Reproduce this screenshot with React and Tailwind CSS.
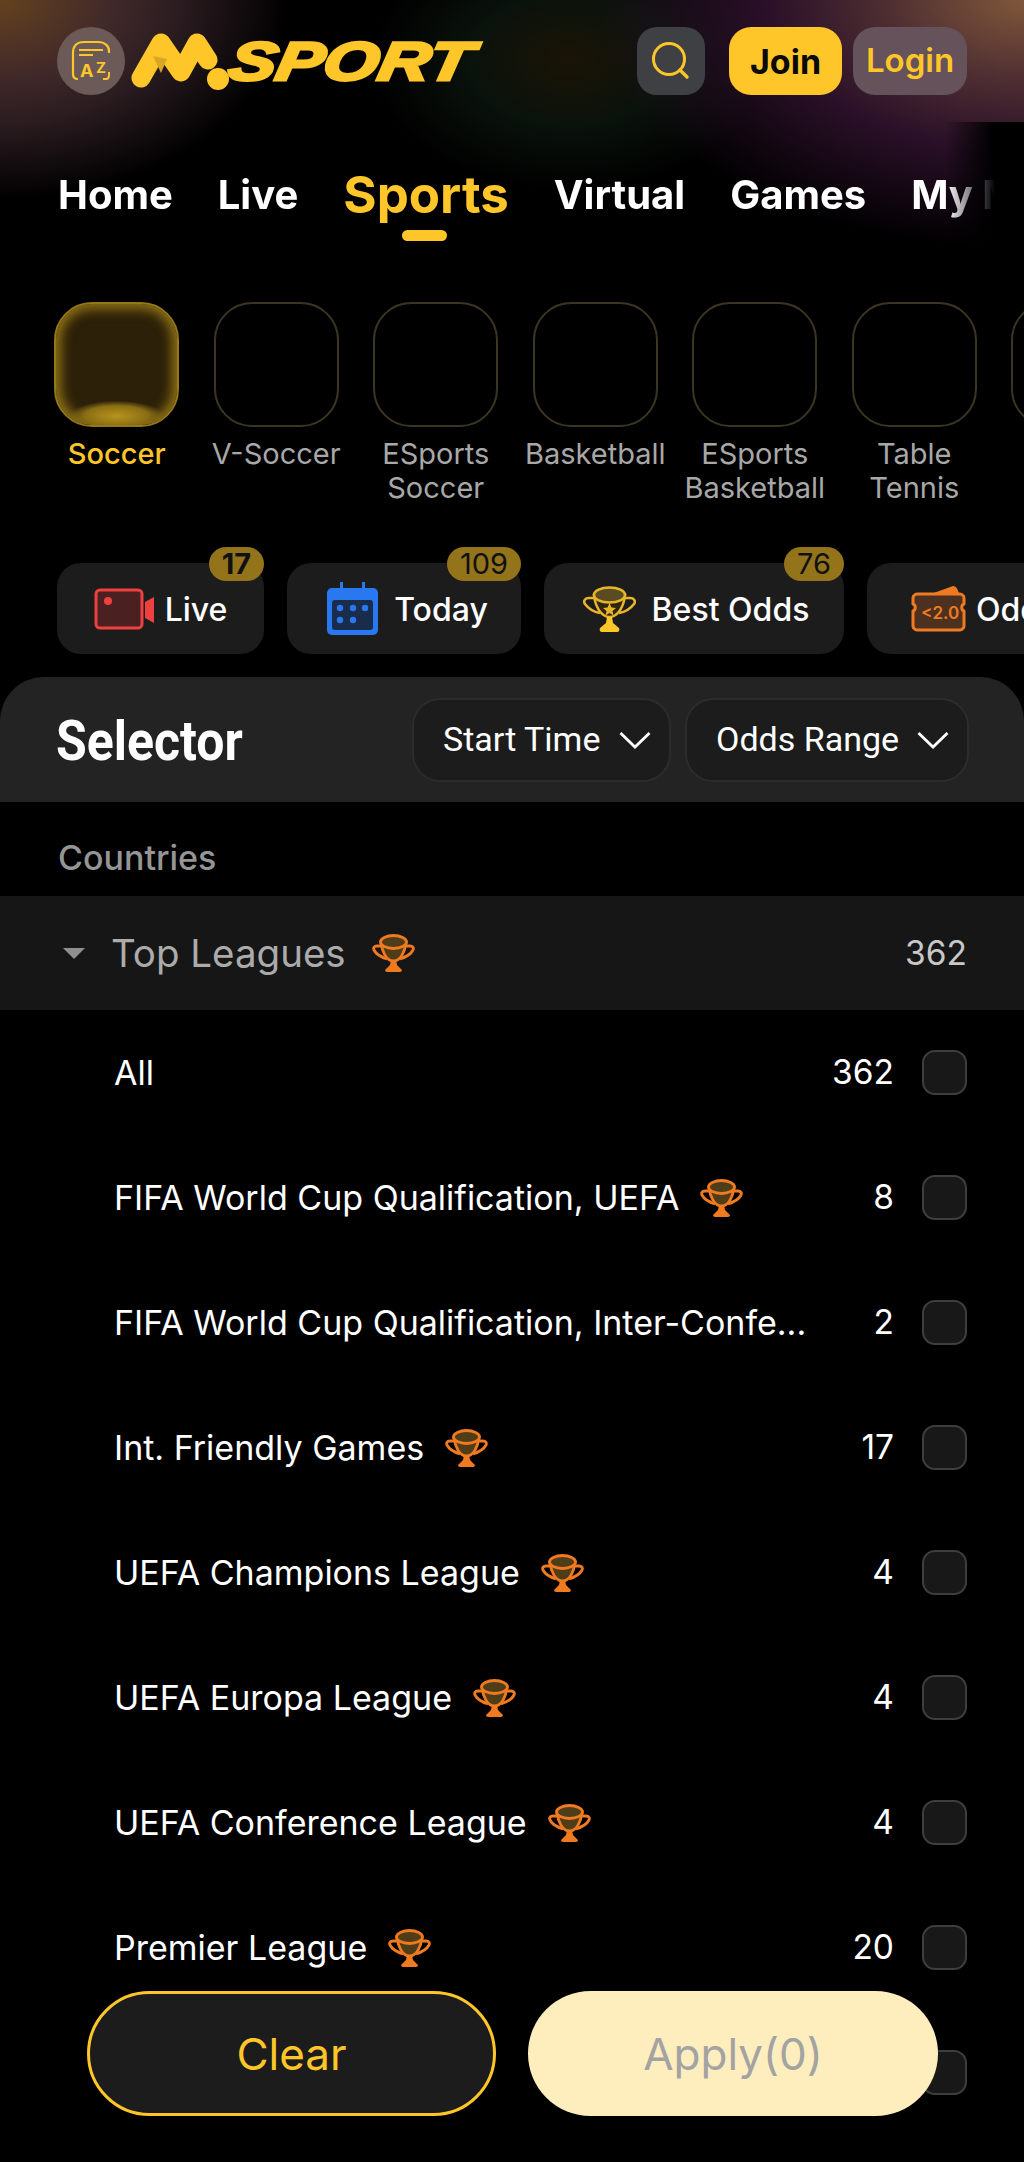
import React from "react";

const Y = "#ffc629";

function Trophy() {
  return (
    <svg viewBox="0 0 43 38" className="w-[43px] h-[38px] shrink-0" fill="none">
      <path d="M9 8c1 9 5 19 12.500 19S33 17 34 8z" fill="#4f3c18" stroke="#f07a20" strokeWidth="2.800" />
      <ellipse cx="21.500" cy="8" rx="13" ry="6.500" fill="#4f3c18" stroke="#f07a20" strokeWidth="2.800" />
      <path d="M9 12H5c-3 0-4 2-3 4 2 4 7 7 13 9M34 12h4c3 0 4 2 3 4-2 4-7 7-13 9" stroke="#f07a20" strokeWidth="2.800" />
      <path d="M19 26h5l1 5 5 5c0 1-1 2-2 2H15c-1 0-2-1-2-2l5-5z" fill="#f07a20" />
    </svg>
  );
}

function Chevron() {
  return (
    <svg viewBox="0 0 32 18" className="w-[32px] h-[18px] shrink-0" fill="none">
      <path d="M1.500 2L16 16 30.500 2" stroke="#fff" strokeWidth="2.800" />
    </svg>
  );
}

function Logo() {
  return (
    <div className="flex items-center ml-[6px] h-[60px]">
      <svg viewBox="0 0 100 58" className="w-[100px] h-[58px] shrink-0" fill="none">
        <path d="M10 46L30 11 50 40 66 11 77 28" stroke={Y} strokeWidth="19" strokeLinecap="round" strokeLinejoin="round" />
        <path d="M22 24l14 3-6 14z" fill="#d9a822" />
        <circle cx="87" cy="47" r="11" fill={Y} />
      </svg>
      <span className="-ml-[1px] w-[246px] inline-block font-['Liberation_Sans',sans-serif] font-bold italic text-[54px] leading-[60px] text-[#ffc629] [-webkit-text-stroke:3px_#ffc629] scale-x-[1.31] -skew-x-[8deg] origin-left whitespace-nowrap">
        SPORT
      </span>
    </div>
  );
}

function Tile({ label, active }) {
  return (
    <div className="w-[127.500px] shrink-0 flex flex-col items-center">
      {active ? (
        <div className="relative w-[125px] h-[125px] rounded-[38px] border-2 border-[#94761b] bg-[#2c2008] shadow-[inset_0_0_12px_5px_#8f7216] overflow-hidden">
          <div className="absolute left-[14px] right-[14px] bottom-0 h-[24px] bg-[radial-gradient(ellipse_at_50%_62%,#b8941c_0%,#8a6e14_48%,transparent_72%)]" />
        </div>
      ) : (
        <div className="w-[125px] h-[125px] rounded-[38px] border-2 border-[#3d3523]" />
      )}
      <p className={`mt-[10px] text-[29px] leading-[34px] text-center whitespace-pre ${active ? "text-[#ffc629] font-medium" : "text-[#a8a8a8]"}`}>
        {label}
      </p>
    </div>
  );
}

function Pill({ icon, label, badge, w, gap, badgeBold }) {
  return (
    <div className={`relative h-[91px] shrink-0 rounded-[24px] bg-[#1c1c1c] flex items-center justify-center ${w} ${gap}`}>
      {icon}
      <span className="mt-[2px] text-[32px] font-medium text-white">{label}</span>
      <span className={`absolute right-0 -top-[16px] h-[34px] rounded-full bg-[#94741a] px-[13px] text-[29px] leading-[34px] text-[#111] ${badgeBold ? "font-bold" : ""}`}>
        {badge}
      </span>
    </div>
  );
}

const rows = [
  ["All", "362", false],
  ["FIFA World Cup Qualification, UEFA", "8", true],
  ["FIFA World Cup Qualification, Inter-Confe...", "2", false],
  ["Int. Friendly Games", "17", true],
  ["UEFA Champions League", "4", true],
  ["UEFA Europa League", "4", true],
  ["UEFA Conference League", "4", true],
  ["Premier League", "20", true],
];

export default function App() {
  return (
    <div className="relative w-[1024px] h-[2162px] overflow-hidden bg-black font-['Inter',sans-serif] text-white">
      <div className="relative h-[250px] bg-[radial-gradient(ellipse_290px_200px_at_0px_0px,#64421f_0%,#3f2829_40%,#2a1c20_62%,transparent_100%),radial-gradient(ellipse_430px_250px_at_1024px_0px,#80573a_0%,#4e2e32_32%,#2a1028_60%,transparent_100%),radial-gradient(ellipse_200px_130px_at_570px_60px,#1a1406_0%,#0a120c_50%,transparent_100%)]">
        <div className="absolute right-0 top-[122px] w-[80px] h-[128px] bg-[linear-gradient(90deg,transparent,#000_62%)]" />
        <div className="relative flex items-center px-[57px] pt-[27px] h-[95px]">
          <div className="w-[68px] h-[68px] rounded-full bg-[#6b5a58] flex items-center justify-center shrink-0">
            <svg viewBox="0 0 42 42" className="w-[42px] h-[42px]" fill="none">
              <path d="M8 39c-3 0-5-2-5-5V13C3 6 7 2 14 2h14c7 0 11 4 11 9v2" stroke={Y} strokeWidth="2.200" />
              <path d="M33 39h3c2 0 3-2 3-4v-3M9 10h24M9 15h14" stroke={Y} strokeWidth="2" />
              <text x="10" y="37" fontSize="18" fontWeight="700" fill={Y} fontFamily="Inter">A</text>
              <text x="26" y="33" fontSize="15" fontWeight="700" fill={Y} fontFamily="Inter">Z</text>
            </svg>
          </div>
          <Logo />
          <div className="ml-auto flex items-center">
            <div className="w-[68px] h-[68px] rounded-[20px] bg-[#3e4044] flex items-center justify-center mr-[24px]">
              <svg viewBox="0 0 40 40" className="w-[40px] h-[40px]" fill="none">
                <circle cx="18" cy="18" r="15.500" stroke={Y} strokeWidth="3" />
                <path d="M29 29l7 7" stroke={Y} strokeWidth="3.400" strokeLinecap="round" />
              </svg>
            </div>
            <div className="w-[113px] h-[68px] rounded-[22px] bg-[#ffc629] flex items-center justify-center text-[34px] font-bold text-[#0a0a0a] mr-[11px]">Join</div>
            <div className="w-[114px] h-[68px] rounded-[22px] bg-[#66525a] flex items-center justify-center text-[33px] font-semibold text-[#ffc629]">Login</div>
          </div>
        </div>
        <nav className="relative flex items-baseline gap-[45px] pl-[58px] mt-[66px] h-[80px] overflow-hidden whitespace-nowrap text-[40px] leading-[60px] font-bold [mask-image:linear-gradient(90deg,#000_945px,transparent_995px)]">
          <span>Home</span>
          <span>Live</span>
          <span className="relative translate-y-[4px] text-[#ffc629] text-[51px]">
            Sports
            <span className="absolute left-[59px] top-[65px] w-[45px] h-[11px] rounded-full bg-[#ffc629]" />
          </span>
          <span>Virtual</span>
          <span>Games</span>
          <span>My Matches</span>
        </nav>
      </div>

      <div className="flex gap-[32px] pl-[53px] mt-[52px] h-[236px] overflow-hidden">
        <Tile label="Soccer" active />
        <Tile label="V-Soccer" />
        <Tile label={"ESports\nSoccer"} />
        <Tile label="Basketball" />
        <Tile label={"ESports\nBasketball"} />
        <Tile label={"Table\nTennis"} />
        <Tile label="" />
      </div>

      <div className="flex gap-[23px] pl-[57px] mt-[8px] pt-[17px] h-[108px] overflow-hidden">
        <Pill w="w-[207px]" gap="gap-[11px]" label="Live" badge="17" badgeBold icon={
          <svg viewBox="0 0 60 42" className="w-[60px] h-[42px]">
            <rect x="2" y="2" width="46" height="38" rx="4" fill="#4a2020" stroke="#ef4040" strokeWidth="3" />
            <circle cx="14" cy="13" r="4" fill="#ef4040" />
            <path d="M51 14l9-5v26l-9-5z" fill="#ef4040" />
          </svg>
        } />
        <Pill w="w-[234px] pl-[6px]" gap="gap-[15px]" label="Today" badge="109" icon={
          <svg viewBox="0 0 53 54" className="w-[53px] h-[54px]">
            <rect x="1" y="6" width="51" height="47" rx="5" fill="#2a78f0" />
            <rect x="6" y="18" width="41" height="30" rx="3" fill="#1a2c4c" />
            <rect x="14" y="0" width="3" height="12" fill="#2a78f0" />
            <rect x="36" y="0" width="3" height="12" fill="#2a78f0" />
            {[[14, 26], [27, 26], [39, 26], [14, 38], [27, 38]].map(([x, y]) => (
              <circle key={`${x}${y}`} cx={x} cy={y} r="3.200" fill="#2a78f0" />
            ))}
          </svg>
        } />
        <Pill w="w-[300px] pl-[4px]" gap="gap-[16px]" label="Best Odds" badge="76" icon={
          <svg viewBox="0 0 53 48" className="w-[53px] h-[48px]" fill="none">
            <path d="M11 10c1 11 7 22 15.500 22S41 21 42 10z" fill="#2e2610" stroke="#e8b52a" strokeWidth="2.600" />
            <ellipse cx="26.500" cy="10" rx="15.500" ry="7.500" fill="#5a4c22" stroke="#e8b52a" strokeWidth="2.600" />
            <path d="M11 13H6c-4 0-6 3-4 6 3 4 9 8 15 9M42 13h5c4 0 6 3 4 6-3 4-9 8-15 9" stroke="#e8b52a" strokeWidth="2.600" />
            <path d="M26.500 18l2 4.500 4.500.5-3.500 3 1 4.500-4-2.500-4 2.500 1-4.500-3.500-3 4.500-.5z" fill="#e8b52a" />
            <path d="M24 32h5l1 6 6 5c1 2 0 4-2 4H19c-2 0-3-2-2-4l6-5z" fill="#ffc629" />
          </svg>
        } />
        <div className="relative h-[91px] w-[200px] shrink-0 rounded-[24px] bg-[#1c1c1c] flex items-center gap-[10px] pl-[44px]">
          <svg viewBox="0 0 55 47" className="w-[55px] h-[47px] shrink-0" fill="none">
            <path d="M20 9L42 1c3 0 5 3 6 8z" fill="#f07a20" />
            <path d="M6 9h43c2 0 4 2 4 4v6c-3 1-3 6 0 7v15c0 2-2 4-4 4H6c-2 0-4-2-4-4V26c3-1 3-6 0-7v-6c0-2 2-4 4-4z" fill="#4c3020" stroke="#f07a20" strokeWidth="3" strokeLinejoin="round" />
            <text x="10" y="34" fontSize="17" fontWeight="600" fill="#f07a20" fontFamily="Inter">&lt;2.0</text>
          </svg>
          <span className="mt-[2px] text-[32px] font-medium whitespace-nowrap">Odds</span>
        </div>
      </div>

      <div className="flex items-center justify-between h-[125px] mt-[23px] rounded-t-[44px] bg-[#232323] pl-[56px] pr-[55px] font-['Roboto',sans-serif]">
        <span className="mt-[3px] text-[50px] font-bold scale-y-110">Selector</span>
        <div className="flex gap-[14px]">
          <div className="w-[259px] h-[84px] rounded-[28px] bg-[#1c1c1c] border-2 border-[#2c2c2c] flex items-center justify-between pl-[29px] pr-[18px] text-[34px]">
            Start Time <Chevron />
          </div>
          <div className="w-[284px] h-[84px] rounded-[28px] bg-[#1c1c1c] border-2 border-[#2c2c2c] flex items-center justify-between pl-[29px] pr-[18px] text-[34px]">
            Odds Range <Chevron />
          </div>
        </div>
      </div>

      <p className="pl-[58px] mt-[36px] text-[34px] leading-[40px] font-medium text-[#959595]">Countries</p>

      <div className="flex items-center h-[114px] mt-[18px] bg-[#161616] pl-[63px] pr-[57px]">
        <span className="w-0 h-0 border-x-[11px] border-x-transparent border-t-[11px] border-t-[#8f8f8f]" />
        <span className="ml-[26px] mt-[2px] text-[38.500px] text-[#ababab]">Top Leagues</span>
        <span className="ml-[26px] flex"><Trophy /></span>
        <span className="ml-auto text-[33.500px] text-[#c8c8c8]">362</span>
      </div>

      <div>
        {rows.map(([name, n, t]) => (
          <div key={name} className="flex items-center h-[125px] pl-[114px] pr-[57px]">
            <span className="text-[34px] whitespace-nowrap">{name}</span>
            {t && <span className="ml-[21px] flex"><Trophy /></span>}
            <span className="ml-auto text-[33.500px]">{n}</span>
            <span className="ml-[28px] w-[45px] h-[45px] rounded-[13px] bg-[#181818] border-2 border-[#3e3e3e] shrink-0" />
          </div>
        ))}
        <div className="flex items-center h-[125px] pl-[114px] pr-[57px]">
          <span className="ml-auto w-[45px] h-[45px] rounded-[13px] bg-[#181818] border-2 border-[#3e3e3e]" />
        </div>
      </div>

      <div className="absolute left-[87px] top-[1991px] flex gap-[32px]">
        <div className="w-[409px] h-[125px] rounded-full bg-[#1c1c1c] border-[3px] border-[#ffc629] flex items-center justify-center text-[44px] text-[#ffc629]">Clear</div>
        <div className="w-[410px] h-[125px] rounded-full bg-[#feeebd] flex items-center justify-center text-[44px] text-[#a3a3a3]">Apply(0)</div>
      </div>
    </div>
  );
}
